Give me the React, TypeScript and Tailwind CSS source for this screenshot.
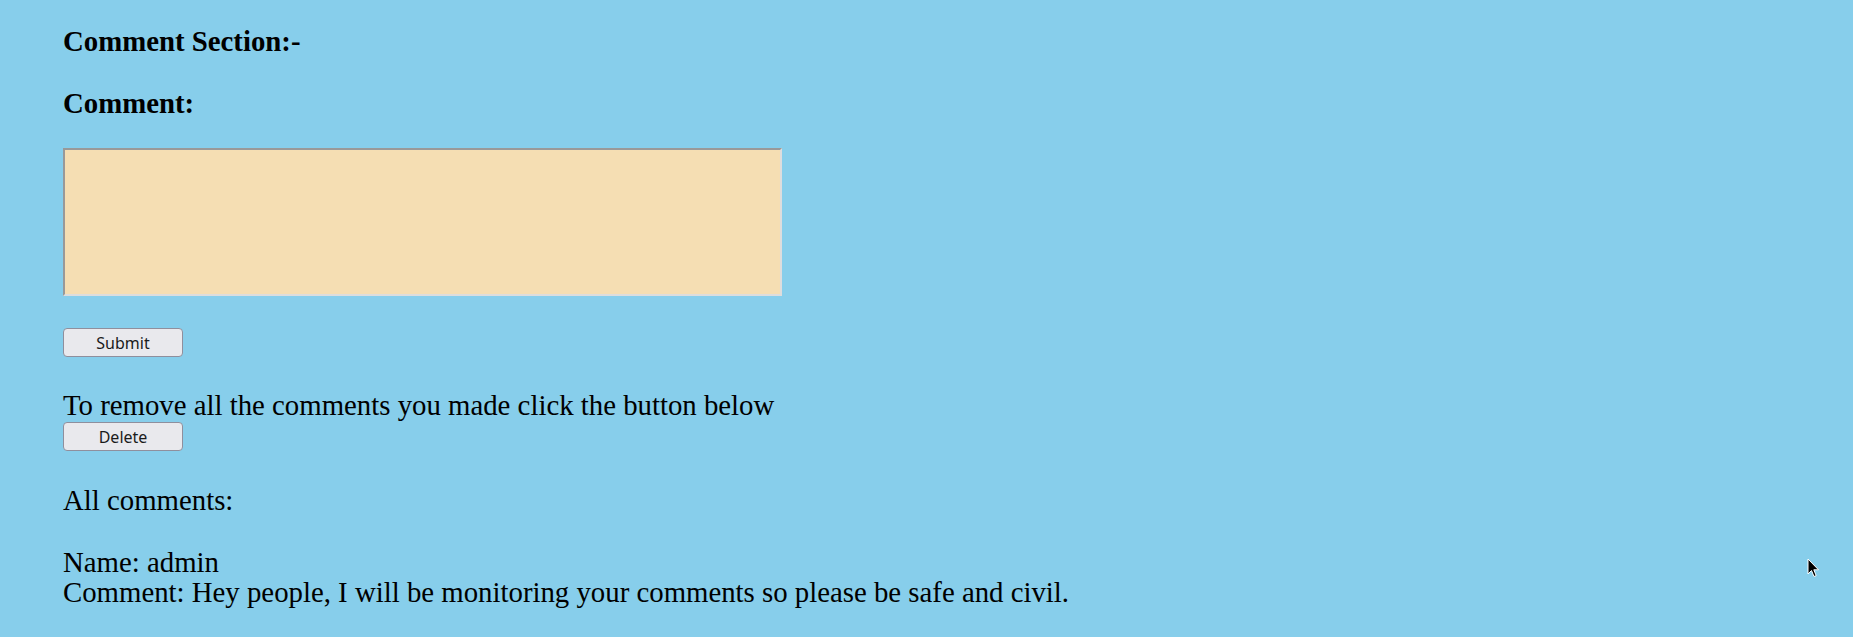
import React from "react";

const serif = "font-['Liberation_Serif','Times_New_Roman',serif]";

function FormButton({ label }: { label: string }) {
  return (
    <button
      type="button"
      className="block h-[29px] w-[120px] rounded-[4px] border border-[#8f8f9d] bg-[#e9e9ed] font-['Noto_Sans',sans-serif] text-[16px] leading-none text-[#1b1b1b]"
    >
      {label}
    </button>
  );
}

export default function App() {
  return (
    <div
      className={`relative h-[637px] w-full overflow-hidden bg-[#87ceeb] pl-[63px] pt-[27px] text-[28.8px] leading-[29px] text-black ${serif}`}
    >
      <h4 className="font-bold">Comment Section:-</h4>
      <h4 className="mt-[33px] font-bold">Comment:</h4>

      <textarea className="mt-[30px] block h-[148px] w-[719px] resize-none border-2 border-t-[#999999] border-l-[#999999] border-b-[#dddddd] border-r-[#dddddd] bg-[#f5deb3] outline-none" />

      <div className="mt-[32px]">
        <FormButton label="Submit" />
      </div>

      <p className="mt-[34px]">To remove all the comments you made click the button below</p>
      <div className="mt-[2px]">
        <FormButton label="Delete" />
      </div>

      <p className="mt-[35px]">All comments:</p>

      <div className="mt-[32px] leading-[30px]">
        <div>Name: admin</div>
        <div>Comment: Hey people, I will be monitoring your comments so please be safe and civil.</div>
      </div>

      {/* mouse pointer seen in the screenshot */}
      <svg
        className="absolute left-[1807px] top-[558px]"
        width="13"
        height="21"
        viewBox="0 0 13 21"
      >
        <path
          d="M1 1 L1 16 L4.5 12.5 L7 18.5 L9.2 17.6 L6.8 11.8 L11.5 11.8 Z"
          fill="#000"
          stroke="#fff"
          strokeWidth="1"
          strokeLinejoin="miter"
        />
      </svg>
    </div>
  );
}
